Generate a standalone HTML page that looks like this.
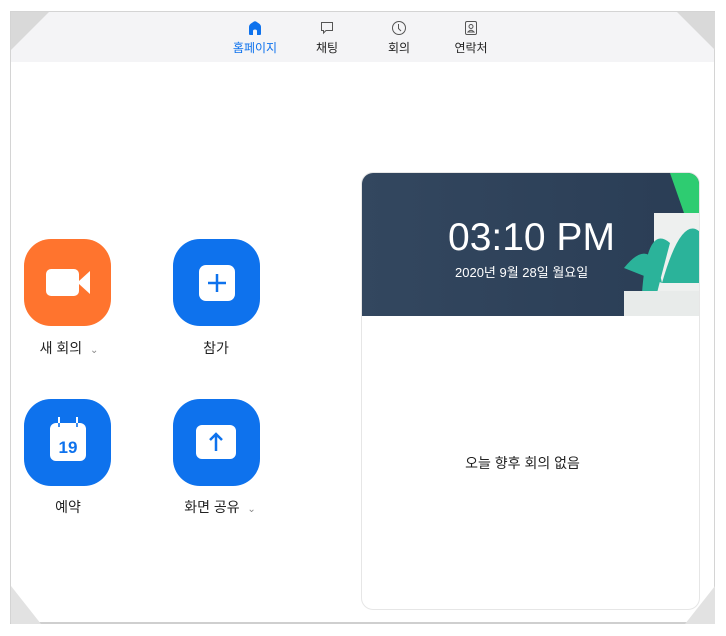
<!DOCTYPE html>
<html><head><meta charset="utf-8"><style>
body{margin:0;width:726px;height:636px;background:#fff;position:relative;overflow:hidden;font-family:"Liberation Sans","Noto Sans CJK KR",sans-serif}
.frame{position:absolute;left:10px;top:11px;width:705px;height:613px;border:1px solid #d4d4d4;border-bottom:2px solid #cfcfcf;box-sizing:border-box;background:#fff}
.hdr{position:absolute;left:11px;top:12px;width:703px;height:50px;background:#f4f4f6}
.tri{position:absolute;width:0;height:0}
.tab{position:absolute;top:20px;text-align:center;font-size:12px;color:#222;width:60px}
.tab svg{display:block;margin:0 auto 3px}
.btn{position:absolute;width:87px;height:87px;border-radius:27px;background:#0e72ed}
.lbl{position:absolute;font-size:14px;color:#222;text-align:center;width:120px}
.card{position:absolute;left:361px;top:172px;width:339px;height:438px;border:1px solid #e6e6e6;border-radius:12px;box-sizing:border-box;overflow:hidden}
.dark{position:absolute;left:0;top:0;width:339px;height:143px;background:linear-gradient(90deg,#33475f,#2a3d55)}
</style></head><body>
<div class="frame"></div>
<div class="hdr"></div>
<div class="tri" style="left:11px;top:12px;border-top:38px solid #d9d9d9;border-right:38px solid transparent"></div>
<div class="tri" style="right:11px;top:12px;border-top:38px solid #d9d9d9;border-left:38px solid transparent"></div>
<div class="tri" style="left:11px;top:586px;border-bottom:38px solid #e2e2e2;border-right:30px solid transparent"></div>
<div class="tri" style="right:11px;top:586px;border-bottom:38px solid #e2e2e2;border-left:30px solid transparent"></div>

<div class="tab" style="left:225px;color:#0e72ed"><svg width="16" height="16" viewBox="0 0 16 16"><path d="M2 7 Q2 5 4 3.5 L7 1.5 Q8 1 9 1.5 L12 3.5 Q14 5 14 7 V14 Q14 15 13 15 H10 V11 Q10 9.5 8 9.5 Q6 9.5 6 11 V15 H3 Q2 15 2 14Z" fill="#0e72ed"/></svg>홈페이지</div>
<div class="tab" style="left:297px"><svg width="16" height="16" viewBox="0 0 16 16"><path d="M2.5 2.5 H13.5 V10.5 H7 L4.5 13 V10.5 H2.5Z" fill="none" stroke="#555" stroke-width="1"/></svg>채팅</div>
<div class="tab" style="left:369px"><svg width="16" height="16" viewBox="0 0 16 16"><circle cx="8" cy="8" r="6.5" fill="none" stroke="#555"/><path d="M7.5 4 V8.5 L10 11" fill="none" stroke="#555"/></svg>회의</div>
<div class="tab" style="left:441px"><svg width="16" height="16" viewBox="0 0 16 16"><rect x="2.5" y="1.5" width="11" height="13" rx="1.5" fill="none" stroke="#555"/><circle cx="8" cy="6.5" r="2" fill="none" stroke="#555"/><path d="M5 12 Q8 8.5 11 12Z" fill="none" stroke="#555"/></svg>연락처</div>

<div class="btn" style="left:24px;top:239px;background:#ff742e"><svg width="87" height="87" viewBox="0 0 87 87"><rect x="22" y="30" width="33" height="27" rx="5" fill="#fff"/><path d="M55 42 L66 32 V55 L55 45Z" fill="#fff"/></svg></div>
<div class="btn" style="left:173px;top:239px"><svg width="87" height="87" viewBox="0 0 87 87"><rect x="26" y="26" width="36" height="36" rx="7" fill="#fff"/><path d="M44 35 V53 M35 44 H53" stroke="#0e72ed" stroke-width="2.5"/></svg></div>
<div class="btn" style="left:24px;top:399px"><svg width="87" height="87" viewBox="0 0 87 87"><rect x="26" y="24" width="36" height="38" rx="6" fill="#fff"/><path d="M35 18 V24 M53 18 V24" stroke="#fff" stroke-width="2"/><path d="M35 24 V28 M53 24 V28" stroke="#0e72ed" stroke-width="1.6"/><text x="44" y="54" text-anchor="middle" font-size="17" font-weight="bold" fill="#0e72ed" font-family="Liberation Sans">19</text></svg></div>
<div class="btn" style="left:173px;top:399px"><svg width="87" height="87" viewBox="0 0 87 87"><rect x="23" y="26" width="40" height="34" rx="6" fill="#fff"/><path d="M43 52 V36 M37 41 L43 35 L49 41" stroke="#0e72ed" stroke-width="2.5" fill="none"/></svg></div>
<div class="lbl" style="left:9px;top:338px">새 회의 &nbsp;<span style="font-size:10px;color:#888">⌄</span></div>
<div class="lbl" style="left:156px;top:338px">참가</div>
<div class="lbl" style="left:8px;top:497px">예약</div>
<div class="lbl" style="left:160px;top:497px">화면 공유 &nbsp;<span style="font-size:10px;color:#888">⌄</span></div>

<div class="card"><div class="dark">
<svg style="position:absolute;left:250px;top:0" width="89" height="143" viewBox="0 0 89 143"><path d="M58 0 H89 V40 H72Z" fill="#2ecc71"/><rect x="42" y="40" width="47" height="103" fill="#eef0ef"/><path d="M12 95 Q40 60 50 110 Z M30 120 Q35 50 58 70 Q50 100 45 120Z M50 110 Q70 40 89 60 V110Z" fill="#2bb39a"/><rect x="12" y="118" width="77" height="25" fill="#e8ebea"/></svg>
<div style="position:absolute;left:86px;top:43px;color:#fff;font-size:39px;letter-spacing:0">03:10 PM</div>
<div style="position:absolute;left:93px;top:89px;color:#fff;font-size:13px">2020년 9월 28일 월요일</div>
</div>
<div style="position:absolute;left:-8px;width:337px;top:280px;text-align:center;font-size:14px;color:#222">오늘 향후 회의 없음</div>
</div>
</body></html>
